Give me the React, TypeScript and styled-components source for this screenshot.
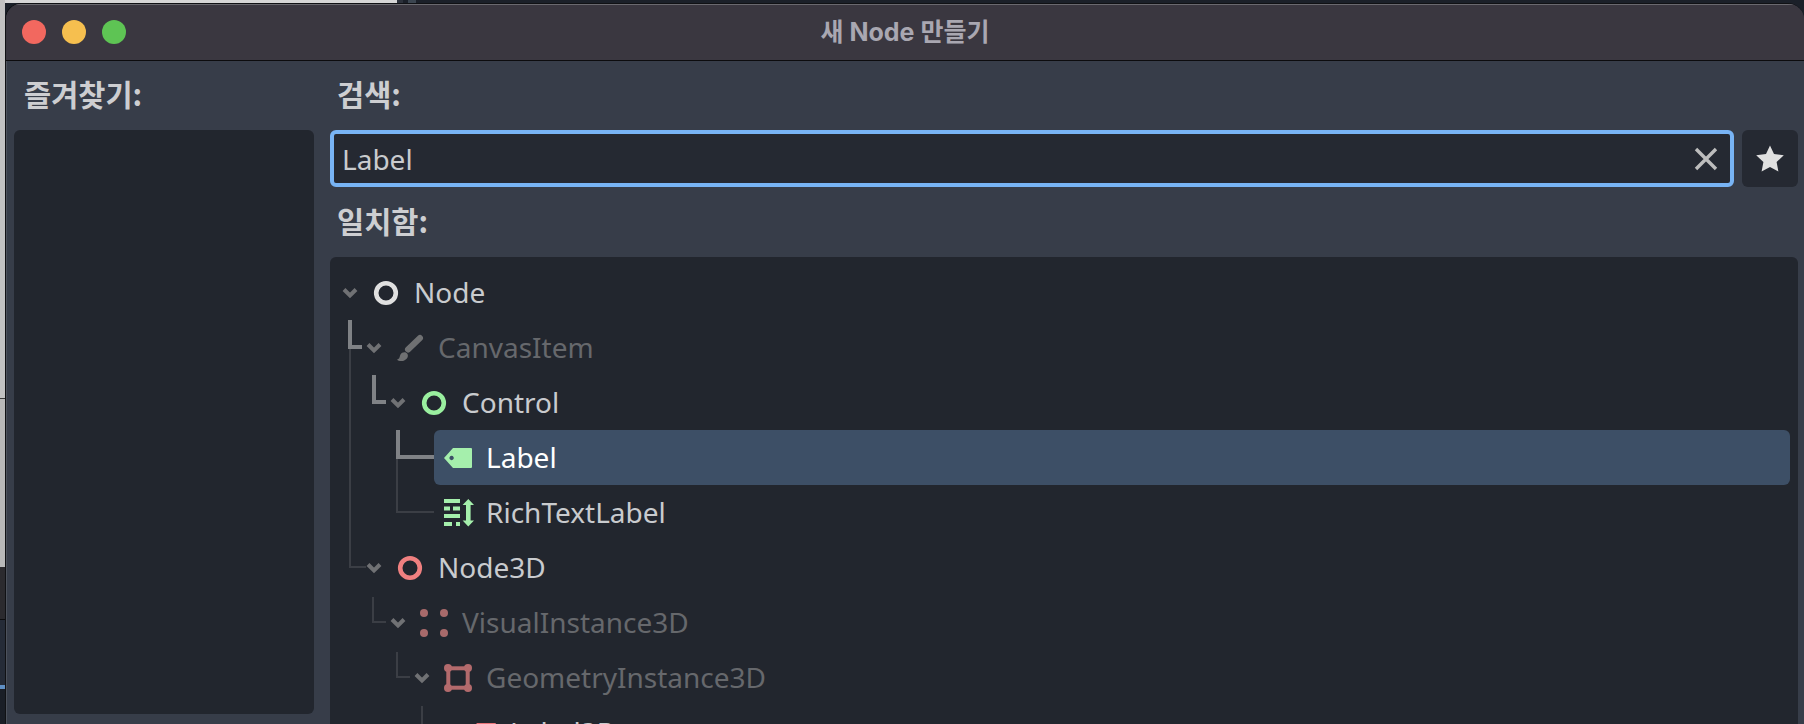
import React from "react";
import styled, { createGlobalStyle } from "styled-components";

const Global = createGlobalStyle`
  html, body { margin: 0; padding: 0; height: 100%; overflow: hidden; background: #1b2029; }
  #root { height: 100%; }
  * { box-sizing: border-box; }
`;

const Desktop = styled.div`
  width: 1804px;
  height: 724px;
  overflow: hidden;
  padding: 3px 0 0 5px;
  background:
    linear-gradient(180deg,
      #c2c2c2 0 398px, #3a3a3a 398px 399px, #b8b8b8 399px 567px,
      #2b2a2e 567px 619px, #0c0c0e 619px 620px, #252b37 620px 685px,
      #5f8fc4 685px 689px, #1a1e26 689px) 0 0 / 5px 100% no-repeat,
    linear-gradient(90deg, #d6d6d6 0 397px, #2c313b 397px 403px, #1b2029 403px 408px, #3b4550 408px 416px, #1b2029 416px) 0 0 / 100% 3px no-repeat,
    #1b2029;
`;

const Win = styled.div`
  width: 1799px;
  height: 721px;
  display: flex;
  flex-direction: column;
  background: #373d49;
  border: 1px solid #101114;
  border-right: none;
  border-bottom: none;
  border-radius: 16px 16px 0 0;
  overflow: hidden;
`;

const TitleBar = styled.header`
  flex: none;
  height: 57px;
  display: grid;
  grid-template-columns: 1fr auto 1fr;
  align-items: center;
  padding-left: 16px;
  background: #3a3740;
  border-bottom: 1px solid #0c0c0e;
  box-shadow: inset 0 1px 0 #6a696f;
`;

const Lights = styled.div`
  display: flex;
  gap: 16px;
`;

const Light = styled.span<{ $color: string }>`
  width: 24px;
  height: 24px;
  border-radius: 50%;
  background: ${(p) => p.$color};
`;

const Title = styled.h1`
  margin: 0 16px 0 0;
  font: 700 25px/1 Inter, "Noto Sans CJK KR", sans-serif;
  color: #a9a7b1;
`;

const Body = styled.div`
  flex: 1;
  min-height: 0;
  display: grid;
  grid-template-columns: 300px 1fr;
  column-gap: 16px;
  padding: 0 6px 0 7px;
  border-left: 1px solid #4d525c;
`;

const LeftCol = styled.section`
  display: flex;
  flex-direction: column;
  padding-bottom: 10px;
  min-height: 0;
`;

const RightCol = styled.section`
  display: flex;
  flex-direction: column;
  min-height: 0;
`;

const SectionLabel = styled.div<{ $inset: number; $h: number }>`
  flex: none;
  height: ${(p) => p.$h}px;
  display: flex;
  align-items: center;
  padding: 0 0 3px ${(p) => p.$inset}px;
  font: 700 29.5px/1 "Noto Sans CJK KR", "Noto Sans", sans-serif;
  color: #cdced1;
`;

const ListBox = styled.div`
  flex: 1;
  background: #22262e;
  border-radius: 6px;
`;

const SearchRow = styled.div`
  flex: none;
  height: 57px;
  display: flex;
  gap: 8px;
`;

const SearchField = styled.div`
  flex: 1;
  display: flex;
  align-items: center;
  justify-content: space-between;
  padding: 0 12px 0 8px;
  background: #252932;
  border: 4px solid #78b4f5;
  border-radius: 6px;
  font: 400 28px/1 "Noto Sans", sans-serif;
  color: #c9cbce;
`;

const StarButton = styled.button`
  flex: none;
  width: 56px;
  padding: 0;
  display: flex;
  align-items: center;
  justify-content: center;
  background: #252932;
  border: none;
  border-radius: 6px;
`;

const TreeBox = styled.div`
  position: relative;
  flex: 1;
  min-height: 0;
  padding: 8px 8px 0 0;
  overflow: hidden;
  background: #22262e;
  border-radius: 6px 6px 0 0;
`;

const Connectors = styled.svg`
  position: absolute;
  left: 0;
  top: 0;
  pointer-events: none;
`;

const Row = styled.div<{ $depth: number }>`
  display: flex;
  align-items: center;
  height: 55px;
  padding-left: ${(p) => 8 + p.$depth * 24}px;
`;

const Arrow = styled.span`
  flex: none;
  width: 24px;
  display: flex;
  justify-content: center;
`;

const RowBody = styled.div<{ $selected?: boolean }>`
  flex: 1;
  height: 55px;
  display: flex;
  align-items: center;
  gap: 14px;
  padding-left: 10px;
  border-radius: 6px;
  background: ${(p) => (p.$selected ? "#3d4f66" : "transparent")};
`;

const IconBox = styled.span`
  flex: none;
  width: 28px;
  height: 28px;
  display: block;
  svg { display: block; overflow: visible; }
`;

const RowText = styled.span<{ $dim?: boolean; $selected?: boolean }>`
  font: 400 28px/1 "Noto Sans", sans-serif;
  margin-top: -2px;
  color: ${(p) => (p.$selected ? "#ffffff" : p.$dim ? "#66686c" : "#c9cbce")};
`;

const Chevron = () => (
  <svg width="16" height="12" viewBox="0 0 16 12">
    <path d="M2 2.5 L8 8.5 L14 2.5" fill="none" stroke="#707174" strokeWidth="4" />
  </svg>
);

const Ring = ({ color }: { color: string }) => (
  <svg width="28" height="28" viewBox="0 0 28 28">
    <circle cx="14" cy="14" r="9.8" fill="none" stroke={color} strokeWidth="4.6" />
  </svg>
);

const Brush = () => (
  <svg width="28" height="28" viewBox="0 0 28 28">
    <path d="M24 4 L12 15.5" stroke="#6f7072" strokeWidth="6" strokeLinecap="round" fill="none" />
    <path d="M1 25.5 C4 25 3.5 22.5 4.5 20.5 C6 18 10 17.5 11.5 20 C13 23 10 26.5 6.5 27 C4 27.3 2 26.8 1 25.5 Z" fill="#6f7072" />
  </svg>
);

const Tag = ({ color }: { color: string }) => (
  <svg width="28" height="28" viewBox="0 0 28 28">
    <path
      fillRule="evenodd"
      d="M9 4 H27 a1 1 0 0 1 1 1 V23 a1 1 0 0 1 -1 1 H9 L0 14 Z M7.6 11.8 a2.2 2.2 0 1 0 0.01 0 Z"
      fill={color}
    />
  </svg>
);

const RichText = () => (
  <svg width="32" height="28" viewBox="0 0 32 28" fill="#a5efac">
    <rect x="0" y="0" width="16" height="4" />
    <rect x="0" y="7.5" width="6" height="4" />
    <rect x="9" y="7.5" width="7" height="4" />
    <rect x="0" y="15" width="16" height="4" />
    <rect x="0" y="23" width="8" height="4" />
    <rect x="12" y="23" width="4" height="4" />
    <path d="M24.3 0 L30 6 H26.6 V21.5 H30 L24.3 27.5 L18.6 21.5 H22 V6 H18.6 Z" />
  </svg>
);

const Dots = () => (
  <svg width="28" height="28" viewBox="0 0 28 28" fill="#a86a6b">
    <circle cx="4" cy="4" r="4" />
    <circle cx="24" cy="4" r="4" />
    <circle cx="4" cy="24" r="4" />
    <circle cx="24" cy="24" r="4" />
  </svg>
);

const Geometry = () => (
  <svg width="28" height="28" viewBox="0 0 28 28" fill="#b36a6c">
    <rect x="4.3" y="4.3" width="19.4" height="19.4" fill="none" stroke="#b36a6c" strokeWidth="4" />
    <circle cx="4" cy="4" r="4" />
    <circle cx="24" cy="4" r="4" />
    <circle cx="4" cy="24" r="4" />
    <circle cx="24" cy="24" r="4" />
  </svg>
);

type Item = {
  name: string;
  depth: number;
  icon: React.ReactNode;
  open?: boolean;
  dim?: boolean;
  selected?: boolean;
};

const items: Item[] = [
  { name: "Node", depth: 0, open: true, icon: <Ring color="#e0e0e0" /> },
  { name: "CanvasItem", depth: 1, open: true, dim: true, icon: <Brush /> },
  { name: "Control", depth: 2, open: true, icon: <Ring color="#9aef9f" /> },
  { name: "Label", depth: 3, selected: true, icon: <Tag color="#a5efac" /> },
  { name: "RichTextLabel", depth: 3, icon: <RichText /> },
  { name: "Node3D", depth: 1, open: true, icon: <Ring color="#f08080" /> },
  { name: "VisualInstance3D", depth: 2, open: true, dim: true, icon: <Dots /> },
  { name: "GeometryInstance3D", depth: 3, open: true, dim: true, icon: <Geometry /> },
  { name: "Label3D", depth: 4, icon: <Tag color="#ea7378" /> },
];

const thin = "#3b3e45";
const heavy = "#808286";

const TreeLines = () => (
  <Connectors width="200" height="467" viewBox="0 0 200 467" fill="none">
    <g stroke={thin} strokeWidth="2">
      <path d="M20 92 V310 H36" />
      <path d="M67 202 V255 H104" />
      <path d="M43 340 V365 H56" />
      <path d="M67 395 V420 H80" />
      <path d="M92 449 V467" />
    </g>
    <g stroke={heavy} strokeWidth="4">
      <path d="M20 63 V90 H32" />
      <path d="M44 118 V145 H56" />
      <path d="M68 173 V200 H104" />
    </g>
  </Connectors>
);

export default function App() {
  return (
    <Desktop>
      <Global />
      <Win>
        <TitleBar>
          <Lights>
            <Light $color="#f2685f" />
            <Light $color="#f6bf4f" />
            <Light $color="#5ec454" />
          </Lights>
          <Title>새 Node 만들기</Title>
        </TitleBar>
        <Body>
          <LeftCol>
            <SectionLabel $h={69} $inset={10}>즐겨찾기:</SectionLabel>
            <ListBox />
          </LeftCol>
          <RightCol>
            <SectionLabel $h={69} $inset={7}>검색:</SectionLabel>
            <SearchRow>
              <SearchField>
                Label
                <svg width="24" height="24" viewBox="0 0 24 24">
                  <path d="M2 2 L22 22 M22 2 L2 22" stroke="#bdbdbd" strokeWidth="3.4" />
                </svg>
              </SearchField>
              <StarButton aria-label="favorite">
                <svg width="28" height="27" viewBox="0 0 28 27">
                  <path d="M14 0.5 L18 9 L27.8 10.3 L20.6 17 L22.4 26.5 L14 22 L5.6 26.5 L7.4 17 L0.2 10.3 L10 9 Z" fill="#e0e0e0" />
                </svg>
              </StarButton>
            </SearchRow>
            <SectionLabel $h={70} $inset={7}>일치함:</SectionLabel>
            <TreeBox>
              <TreeLines />
              {items.map((it) => (
                <Row key={it.name} $depth={it.depth}>
                  <Arrow>{it.open && <Chevron />}</Arrow>
                  <RowBody $selected={it.selected}>
                    <IconBox>{it.icon}</IconBox>
                    <RowText $dim={it.dim} $selected={it.selected}>{it.name}</RowText>
                  </RowBody>
                </Row>
              ))}
            </TreeBox>
          </RightCol>
        </Body>
      </Win>
    </Desktop>
  );
}
